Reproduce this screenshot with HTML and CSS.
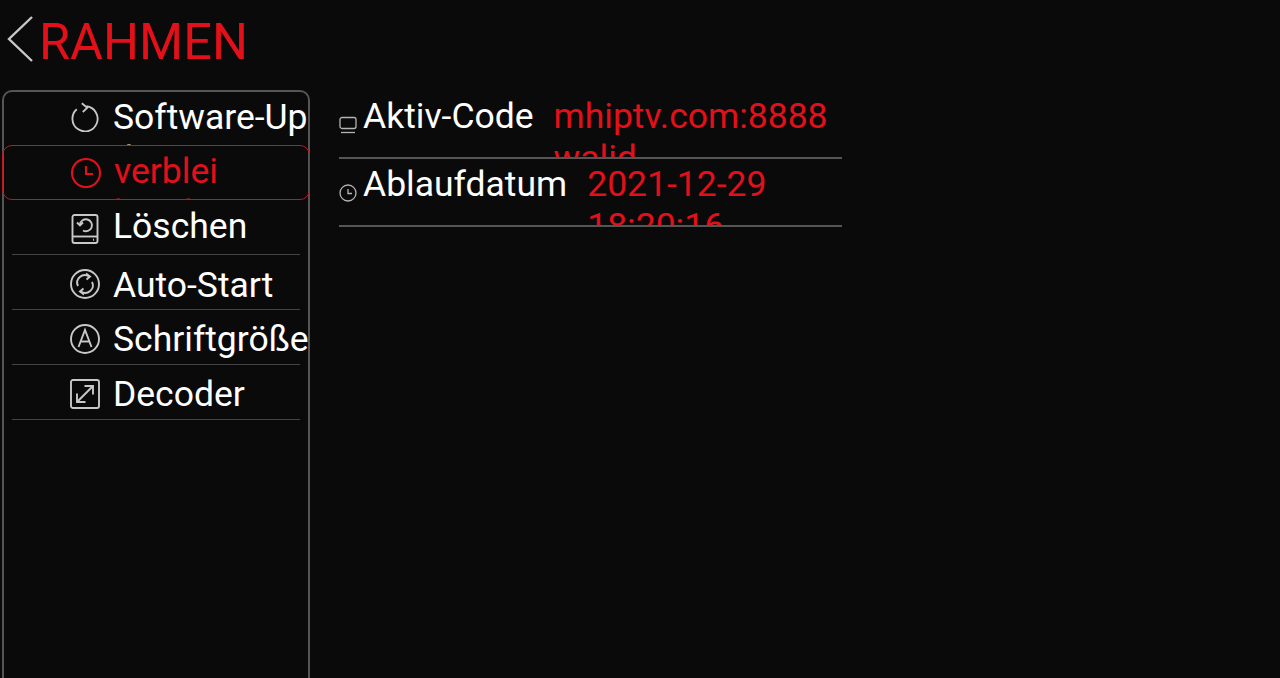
FILE: index.html
```html
<!DOCTYPE html>
<html lang="de">
<head>
    <meta charset="UTF-8">
    <meta name="viewport" content="width=device-width, initial-scale=1.0">
    <title>Rahmen</title>
    <link rel="stylesheet" href="styles.css">
</head>
<body>
    <header class="header">
        <svg class="back-icon" width="26" height="46" viewBox="0 0 26 46"><path d="M25 1 2 23l23 22"/></svg>
        <h1 class="title">RAHMEN</h1>
    </header>

    <div class="content">
        <nav class="sidebar">
            <div class="row row-first row-top">
                <svg class="row-icon" viewBox="0 0 30 31"><path d="M16.500 4.400A13 13 0 1 1 6.500 7.500"/><path d="M11.700 1.300 17.300 6l-4.600 4.300"/></svg>
                <span class="row-label">Software-Up<br>date</span>
            </div>
            <div class="row row-active row-top">
                <svg class="row-icon" viewBox="0 0 30 30"><circle cx="15" cy="15" r="14"/><path d="M15 8v8h7"/></svg>
                <span class="row-label">verblei<br>bende Zeit</span>
            </div>
            <div class="row row-top">
                <svg class="row-icon" viewBox="0 0 30 30"><rect x="2.500" y="1" width="25" height="28" rx="2"/><path d="M2.500 22.500h25"/><path d="M10 10.500a6 6 0 1 1 3 6"/><path d="M7 8.500l3 3 3-3"/><path d="M23 25.800h1"/></svg>
                <span class="row-label">Löschen<br>von Cover</span>
            </div>
            <div class="row row-low">
                <svg class="row-icon" viewBox="0 0 30 30"><circle cx="15" cy="15" r="14"/><path d="M8 17a7.500 7.500 0 0 1 11-9.500"/><path d="M16 4.500l4 3-3.500 3"/><path d="M22 13a7.500 7.500 0 0 1-11 9.500"/><path d="M14 25.500l-4-3 3.500-3"/></svg>
                <span class="row-label">Auto-Start</span>
            </div>
            <div class="row">
                <svg class="row-icon" viewBox="0 0 30 30"><circle cx="15" cy="15" r="14"/><path d="M8.500 23 15 6l6.500 17"/><path d="M10.800 17.500h8.400"/></svg>
                <span class="row-label">Schriftgröße</span>
            </div>
            <div class="row">
                <svg class="row-icon" viewBox="0 0 30 30"><rect x="1" y="1" width="28" height="28" rx="2"/><path d="M7 23 23 7"/><path d="M14.500 7H23v8.500"/><path d="M7 14.500V23h8.500"/></svg>
                <span class="row-label">Decoder</span>
            </div>
        </nav>

        <main class="details">
            <div class="detail">
                <svg class="detail-icon" viewBox="0 0 18 18"><rect x="1" y="1.500" width="16" height="11" rx="2"/><path d="M2 16.500h14"/></svg>
                <span class="detail-label">Aktiv-Code</span>
                <span class="detail-value">mhiptv.com:8888 walid</span>
            </div>
            <div class="detail">
                <svg class="detail-icon" viewBox="0 0 18 18"><circle cx="9" cy="9" r="8"/><path d="M9 5v4.500h4"/></svg>
                <span class="detail-label">Ablaufdatum</span>
                <span class="detail-value">2021-12-29 18:20:16</span>
            </div>
        </main>
    </div>
</body>
</html>
```

FILE: styles.css
```css
* {
    margin: 0;
    padding: 0;
    box-sizing: border-box;
}

html, body {
    height: 100%;
    overflow: hidden;
}

body {
    background: #0a0a0a;
    color: #fff;
    font-family: Roboto, sans-serif;
    font-size: 35.5px;
}

svg {
    fill: none;
    flex-shrink: 0;
}

.header {
    height: 90px;
    display: flex;
    align-items: flex-start;
    padding: 16px 0 0 7px;
}

.back-icon {
    stroke: #c8c8c8;
    stroke-width: 2.4;
}

.title {
    margin: -4px 0 0 6px;
    color: #e3101a;
    font-size: 50.5px;
    font-weight: 400;
}

.content {
    display: flex;
    align-items: flex-start;
    padding-left: 2px;
}

.sidebar {
    width: 308px;
    height: 600px;
    border: 2px solid #555;
    border-radius: 10px;
}

.row {
    position: relative;
    height: 55px;
    display: flex;
    align-items: center;
    gap: 13px;
    padding: 2px 0 0 66px;
    overflow: hidden;
}

.row::after {
    content: "";
    position: absolute;
    left: 8px;
    right: 8px;
    bottom: 0;
    height: 1px;
    background: #444;
}

.row-first {
    height: 53px;
}

.row-top {
    align-items: flex-start;
    padding-top: 5px;
}

.row-first {
    padding-top: 4px;
}

.row-low {
    padding-top: 4px;
}

.row-active {
    margin: 0 -2px;
    padding-top: 4px;
    padding-left: 68px;
    border: 1px solid #c4161e;
    border-radius: 10px;
    color: #e3101a;
}

.row-first::after,
.row-active::after {
    display: none;
}

.row-icon {
    width: 30px;
    height: 30px;
    stroke: #c8c8c8;
    stroke-width: 1.9;
    align-self: center;
}

.row-low .row-icon {
    margin-top: -2px;
}

.row-top .row-icon {
    margin-top: -3px;
}

.row-first .row-icon {
    margin-top: -7px;
}

.row-active .row-icon {
    stroke: #e3101a;
    stroke-width: 2.1;
}

/* second line is cut by the row, it still shows over the divider */
.row-label {
    position: relative;
    z-index: 1;
    width: 195px;
    white-space: nowrap;
    overflow: hidden;
}

.details {
    width: 503px;
    margin: 1px 0 0 29px;
}

.detail {
    height: 68px;
    display: flex;
    align-items: flex-start;
    padding-top: 4px;
    border-bottom: 2px solid #555;
    overflow: hidden;
}

.detail-icon {
    width: 18px;
    height: 18px;
    margin: 21px 6px 0 0;
    stroke: #b4b4b4;
    stroke-width: 1.3;
}

.detail-label {
    margin-right: 20px;
    white-space: nowrap;
}

.detail-value {
    flex: 1;
    color: #e3101a;
}
```
